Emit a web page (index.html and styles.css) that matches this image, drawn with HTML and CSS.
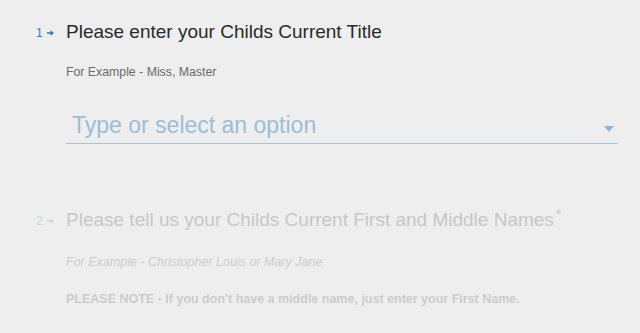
FILE: index.html
```html
<!DOCTYPE html>
<html lang="en">
  <head>
    <meta charset="UTF-8" />
    <title>Child Details</title>
    <link rel="stylesheet" href="styles.css">
  </head>
  <body>
    <div class="form">
      <div class="question active">
        <div class="counter">
          1
          <svg class="arrow" width="7" height="6" viewBox="0 0 7 6">
            <path d="M0 2.2 H3.5 V0.3 L7 3 L3.5 5.7 V3.8 H0 Z" fill="currentColor" />
          </svg>
        </div>
        <div class="content">
          <h2 class="title">Please enter your Childs Current Title</h2>
          <p class="desc">For Example - Miss, Master</p>
          <div class="dropdown">
            <input type="text" placeholder="Type or select an option" />
            <svg class="caret" width="10" height="6" viewBox="0 0 10 6">
              <path d="M0 0 L10 0 L5 6 Z" fill="#8fb5d4" />
            </svg>
          </div>
        </div>
      </div>

      <div class="question faded">
        <div class="counter">
          2
          <svg class="arrow" width="7" height="6" viewBox="0 0 7 6">
            <path d="M0 2.2 H3.5 V0.3 L7 3 L3.5 5.7 V3.8 H0 Z" fill="currentColor" />
          </svg>
        </div>
        <div class="content">
          <h2 class="title">Please tell us your Childs Current First and Middle Names<sup>*</sup></h2>
          <p class="desc"><em>For Example - Christopher Louis or Mary Jane</em></p>
          <p class="desc note"><strong>PLEASE NOTE - If you don't have a middle name, just enter your First Name.</strong></p>
        </div>
      </div>
    </div>
  </body>
</html>
```

FILE: styles.css
```css
body {
  margin: 0;
  background: #eeeeee;
  font-family: "Liberation Sans", Arial, sans-serif;
  color: #2a2a2a;
}
.form {
  padding: 20px 22px 0 36px;
}
.question {
  display: flex;
}
.counter {
  width: 30px;
  flex-shrink: 0;
  font-size: 12px;
  color: #2f78b4;
  padding-top: 6px;
}
.arrow {
  margin-left: 1px;
  vertical-align: 1px;
}
.content {
  flex: 1;
}
.title {
  margin: 0;
  font-size: 19px;
  font-weight: normal;
  line-height: 24px;
}
.title sup {
  font-size: 14px;
  vertical-align: top;
  position: relative;
  top: -6px;
  margin-left: 2px;
}
.desc {
  margin: 21px 0 0;
  font-size: 12.3px;
  color: #6a6a6a;
}
.dropdown {
  position: relative;
  margin-top: 33px;
  border-bottom: 1px solid #a9c4d8;
  display: flex;
  align-items: center;
}
.dropdown input {
  flex: 1;
  border: none;
  background: transparent;
  font-family: inherit;
  font-size: 23px;
  padding: 0 0 4px 6px;
  outline: none;
}
.dropdown input::placeholder {
  color: #9dbdd6;
}
.caret {
  margin-right: 4px;
  margin-top: 2px;
}
.faded {
  opacity: 0.2;
  margin-top: 64px;
}
.faded .counter {
  color: #3a7a9e;
}
.faded .desc {
  color: #444;
  font-size: 12.5px;
}
.faded .desc:first-of-type {
  margin-top: 23px;
}
.note {
  margin-top: 23px;
}
```
